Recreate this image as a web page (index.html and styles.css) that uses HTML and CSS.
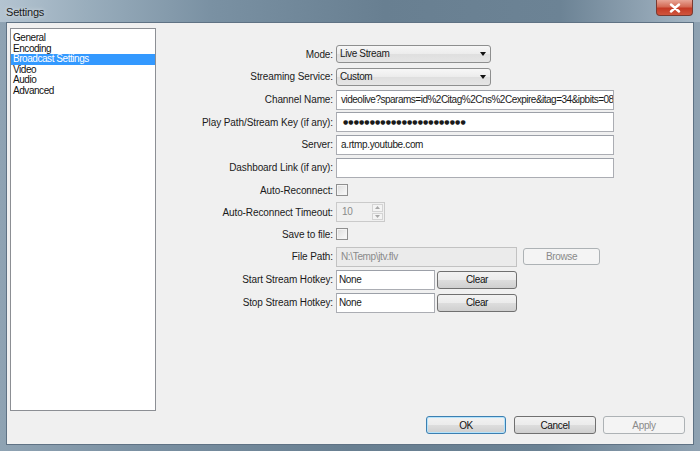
FILE: index.html
```html
<!DOCTYPE html>
<html>
<head>
<meta charset="utf-8">
<link rel="stylesheet" href="styles.css">
</head>
<body>
<div class="window">
  <div class="titlebar">
    <span class="title">Settings</span>
    <span class="close"><svg width="12" height="10" viewBox="0 0 12 10"><path d="M2 1.5 L10 8.5 M10 1.5 L2 8.5" stroke="#fff" stroke-width="2.4" stroke-linecap="round"/></svg></span>
  </div>
  <div class="client">
    <div class="main">
      <ul class="list">
        <li>General</li>
        <li>Encoding</li>
        <li class="sel">Broadcast Settings</li>
        <li>Video</li>
        <li>Audio</li>
        <li>Advanced</li>
      </ul>
      <div class="form">
        <label>Mode:</label>
        <div class="cell"><div class="combo">Live Stream<span class="arrow"></span></div></div>

        <label>Streaming Service:</label>
        <div class="cell"><div class="combo">Custom<span class="arrow"></span></div></div>

        <label>Channel Name:</label>
        <div class="cell"><div class="input wide chan">videolive?sparams=id%2Citag%2Cns%2Cexpire&amp;itag=34&amp;ipbits=08</div></div>

        <label>Play Path/Stream Key (if any):</label>
        <div class="cell"><div class="input wide dots">●●●●●●●●●●●●●●●●●●●●●●●</div></div>

        <label>Server:</label>
        <div class="cell"><div class="input wide">a.rtmp.youtube.com</div></div>

        <label>Dashboard Link (if any):</label>
        <div class="cell"><div class="input wide"></div></div>

        <label>Auto-Reconnect:</label>
        <div class="cell"><span class="check"></span></div>

        <label>Auto-Reconnect Timeout:</label>
        <div class="cell"><div class="spin"><span class="spinval">10</span><span class="spinbtns"><span class="sb"><svg width="5" height="3" viewBox="0 0 5 3"><path d="M0 3 L2.5 0 L5 3Z" fill="#a8a8a8"/></svg></span><span class="sb"><svg width="5" height="3" viewBox="0 0 5 3"><path d="M0 0 L2.5 3 L5 0Z" fill="#a8a8a8"/></svg></span></span></div></div>

        <label>Save to file:</label>
        <div class="cell"><span class="check"></span></div>

        <label>File Path:</label>
        <div class="cell"><div class="input path disabled">N:\Temp\jtv.flv</div><div class="btn browse disabled">Browse</div></div>

        <label>Start Stream Hotkey:</label>
        <div class="cell"><div class="input hotkey">None</div><div class="btn clear">Clear</div></div>

        <label>Stop Stream Hotkey:</label>
        <div class="cell"><div class="input hotkey">None</div><div class="btn clear">Clear</div></div>
      </div>
    </div>
    <div class="footer">
      <div class="btn ok">OK</div>
      <div class="btn cancel">Cancel</div>
      <div class="btn apply disabled">Apply</div>
    </div>
  </div>
</div>
</body>
</html>
```
FILE: styles.css
```css
* { box-sizing: border-box; }
html, body { margin: 0; padding: 0; }
body {
  width: 700px;
  height: 451px;
  overflow: hidden;
  font-family: "Liberation Sans", Arial, sans-serif;
  font-size: 10px;
  letter-spacing: -0.35px;
  color: #1a1a1a;
}
.window {
  width: 700px;
  height: 451px;
  display: flex;
  flex-direction: column;
  padding: 0 6px 6px 6px;
  background: linear-gradient(90deg, #8fa3b3 0%, #7a90a2 20%, #687f91 50%, #6b8294 78%, #8fa2b2 100%);
}
.titlebar {
  height: 23px;
  display: flex;
  align-items: flex-start;
  justify-content: space-between;
  background: linear-gradient(90deg, #b4c4d1 0%, #9aaebd 12%, #7a91a3 30%, #687f91 55%, #6c8395 80%, #a7b8c6 100%);
  margin: 0 -6px;
  padding: 0 7px 0 6px;
}
.title {
  font-size: 11px;
  letter-spacing: -0.2px;
  line-height: 12px;
  margin-top: 6px;
  color: #1a1a1a;
  text-shadow: 0 0 4px rgba(255,255,255,0.7);
}
.close {
  width: 37px;
  height: 16px;
  display: flex;
  align-items: center;
  justify-content: center;
  border: 1px solid #7a3a30;
  border-top: none;
  border-radius: 0 0 4px 4px;
  background: linear-gradient(#e8a596 0%, #d46a55 45%, #c43a25 55%, #d0553d 100%);
}
.client {
  flex: 1;
  display: flex;
  flex-direction: column;
  background: #f0f0f0;
  border: 1px solid #5f7284;
  padding: 5px 8px 10px 3px;
}
.main {
  display: flex;
  height: 383px;
}
.list {
  list-style: none;
  margin: 0;
  padding: 4px 0 0 0;
  width: 146px;
  height: 383px;
  background: #fff;
  border: 1px solid #8c8f94;
  letter-spacing: -0.45px;
}
.list li {
  height: 10.6px;
  line-height: 10.6px;
  padding-left: 2px;
  white-space: nowrap;
  color: #111;
}
.list li.sel {
  background: #3399ff;
  color: #fff;
}
.form {
  display: grid;
  grid-template-columns: 177px 1fr;
  grid-template-rows: 22px 23px 23px 22px 23px 23px 22px 22px 22px 23px 23px 23px;
  column-gap: 3px;
  padding-top: 15px;
  align-content: start;
}
.form label {
  text-align: right;
  align-self: center;
  white-space: nowrap;
  letter-spacing: -0.1px;
  color: #1a1a1a;
}
.cell {
  display: flex;
  align-items: center;
}
.combo {
  width: 155px;
  height: 18px;
  border: 1px solid #8e8f8f;
  border-radius: 3px;
  background: linear-gradient(#f7f7f7 0%, #ececec 50%, #dfdfdf 51%, #e5e5e5 100%);
  padding-left: 3px;
  line-height: 16px;
  display: flex;
  justify-content: space-between;
  align-items: center;
}
.arrow {
  width: 0;
  height: 0;
  border-left: 3.5px solid transparent;
  border-right: 3.5px solid transparent;
  border-top: 4px solid #111;
  margin-right: 4px;
}
.input {
  height: 20px;
  background: #fff;
  border: 1px solid #abadb3;
  border-top-color: #9ca0a8;
  padding: 0 4px;
  line-height: 18px;
  white-space: nowrap;
  overflow: hidden;
}
.wide { width: 278px; }
.chan { letter-spacing: -0.5px; padding-left: 4px; }
.dots {
  font-family: "DejaVu Sans", sans-serif;
  font-size: 6px;
  letter-spacing: 0.1px;
  padding-left: 6px;
}
.check {
  width: 12px;
  height: 12px;
  border: 1px solid #8f8f8f;
  background: linear-gradient(135deg, #dcdcdc, #fbfbfb);
  box-shadow: inset 0 0 0 1px #f4f4f4;
}
.spin {
  width: 49px;
  height: 20px;
  border: 1px solid #cacaca;
  background: #f0f0f0;
  display: flex;
  justify-content: space-between;
}
.spinval {
  color: #8a8a8a;
  padding-left: 5px;
  line-height: 18px;
}
.spinbtns {
  width: 12px;
  display: flex;
  flex-direction: column;
  padding: 1px 1px 1px 0;
  gap: 1px;
}
.sb {
  flex: 1;
  border: 1px solid #d4d4d4;
  background: #f4f4f4;
  display: flex;
  align-items: center;
  justify-content: center;
}
.path {
  width: 181px;
}
.disabled.input {
  background: #ebebeb;
  border-color: #c2c2c2;
  color: #8a8a8a;
}
.btn {
  height: 18px;
  border: 1px solid #707070;
  border-radius: 3px;
  background: linear-gradient(#f2f2f2 0%, #ebebeb 50%, #dddddd 51%, #cfcfcf 100%);
  display: flex;
  align-items: center;
  justify-content: center;
  color: #111;
}
.btn.disabled {
  border-color: #adb2b5;
  background: #f4f4f4;
  color: #8a8a8a;
}
.browse {
  width: 77px;
  height: 17px;
  margin-left: 6px;
}
.hotkey {
  width: 99px;
  padding-left: 2px;
  line-height: 17px;
}
.clear {
  width: 80px;
  margin-left: 2px;
}
.footer {
  margin-top: 5px;
  display: flex;
  justify-content: flex-end;
}
.footer .btn {
  height: 18px;
  width: 82px;
}
.ok {
  width: 80px !important;
  border-color: #3c7fb1 !important;
  box-shadow: inset 0 0 0 1px #b5e3fb;
}
.cancel { margin-left: 8px; }
.apply { margin-left: 7px; }
```
